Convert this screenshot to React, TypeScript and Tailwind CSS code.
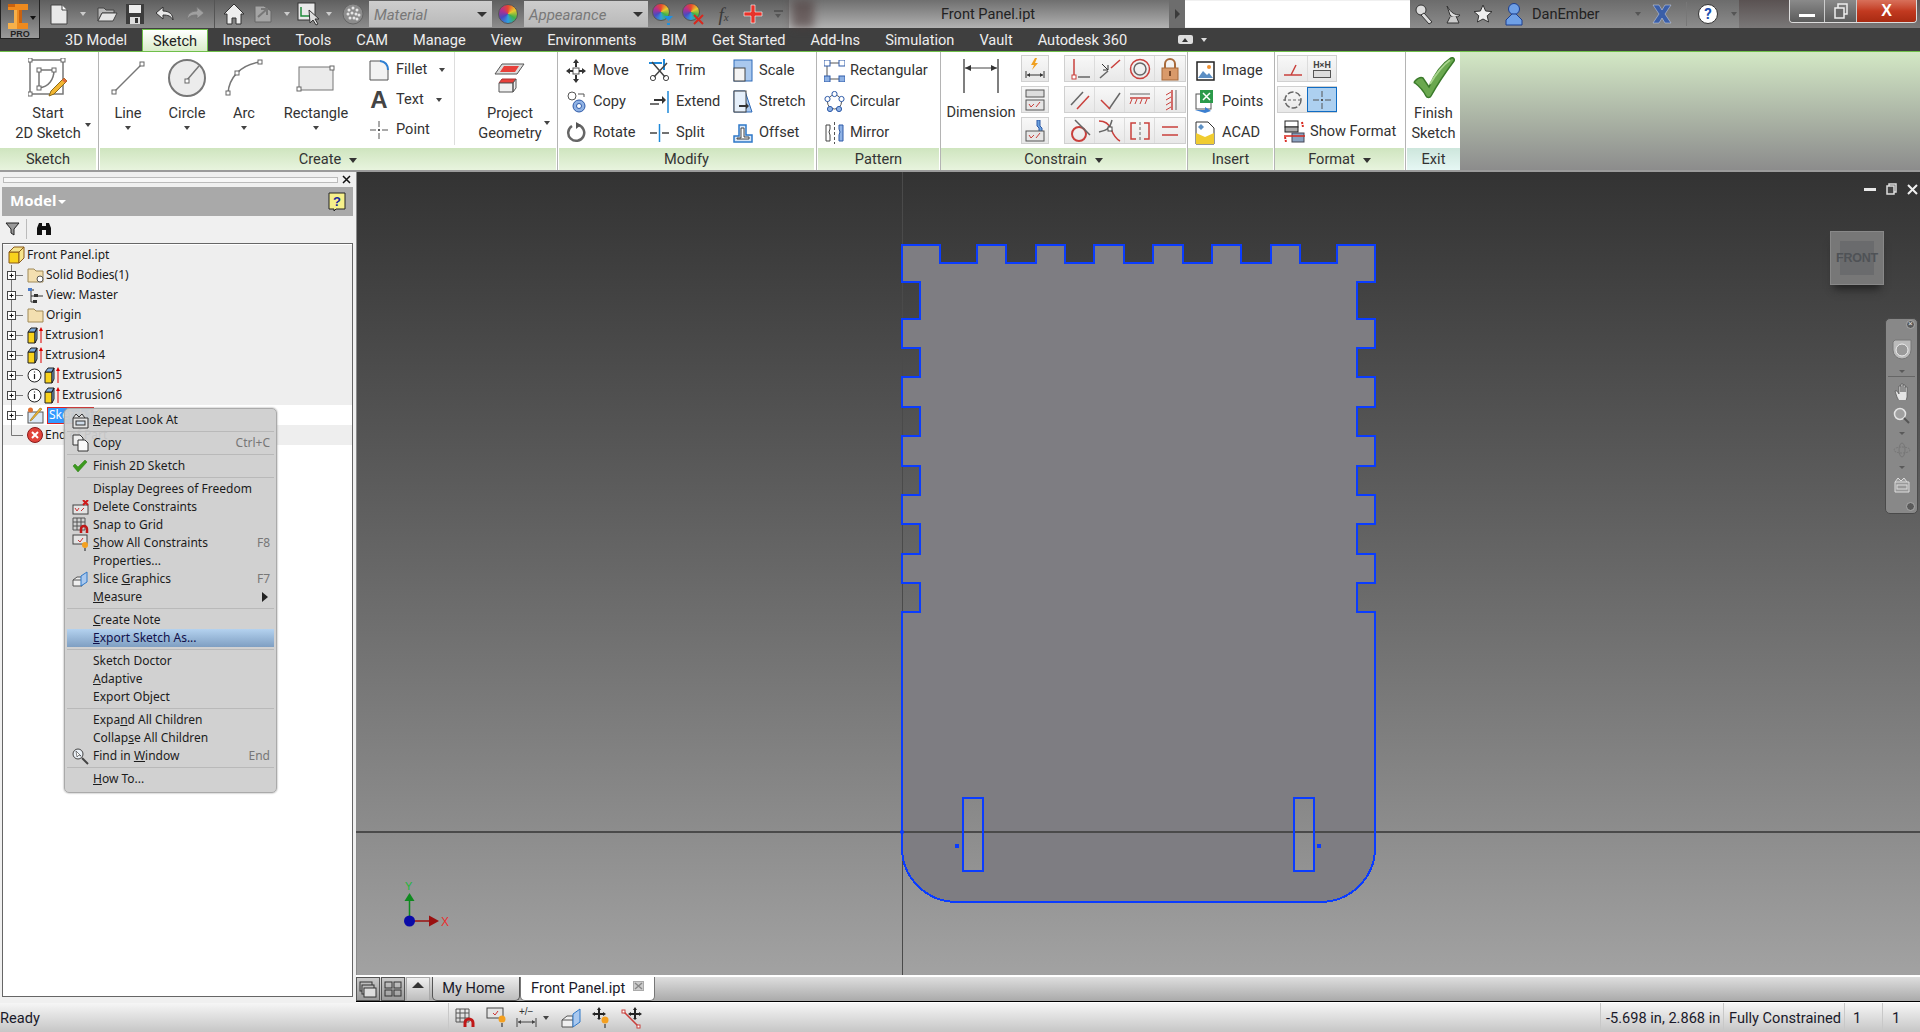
import React from "react";
import { clsx } from "clsx";

type Kids = { children?: React.ReactNode };

const G = "#666";
const R = "#c9403c";

function S({ w, h, children }: { w: number; h: number } & Kids) {
  return (
    <svg width={w} height={h} viewBox={`0 0 ${w} ${h}`} fill="none" className="shrink-0">
      {children}
    </svg>
  );
}

// little square handle used on the sketch icons
function N({ x, y, c = "#666" }: { x: number; y: number; c?: string }) {
  return <rect x={x - 2} y={y - 2} width={4} height={4} fill="#fff" stroke={c} />;
}

function Caret({ className }: { className?: string }) {
  return <span className={clsx("inline-block w-0 h-0 border-x-[3px] border-x-transparent border-t-[4px]", className ?? "border-t-[#444]")} />;
}

/* ---------- title bar ---------- */

function Slot({ className, children }: { className: string } & Kids) {
  return <div className={clsx("flex items-center justify-center shrink-0 h-full", className)}>{children}</div>;
}

const IconNew = () => (
  <S w={20} h={21}>
    <path d="M2 1h11l5 5v14H2z" fill="#e8e8e8" stroke="#444" />
    <path d="M13 1v5h5" fill="#fff" stroke="#444" />
  </S>
);
const IconOpen = () => (
  <S w={22} h={18}>
    <path d="M2 3h6l2 2h8v3H6L2 16z" fill="#b9b9b9" stroke="#444" />
    <path d="M6 8h15l-4 8H2z" fill="#e5e5e5" stroke="#444" />
  </S>
);
const IconSave = () => (
  <S w={20} h={22}>
    <rect x="1" y="1" width="18" height="20" fill="#3c3c3c" />
    <rect x="4" y="2" width="12" height="8" fill="#eee" />
    <rect x="5" y="14" width="10" height="7" fill="#ddd" />
    <rect x="10" y="15" width="3" height="5" fill="#333" />
  </S>
);
const IconUndo = ({ dim }: { dim?: boolean }) => (
  <S w={20} h={16}>
    <path d="M8 1 1 7l7 6V9c5 0 8 1 10 5 0-6-4-9-10-9z" fill={dim ? "#a0a0a0" : "#e8e8e8"} stroke={dim ? "#777" : "#333"} />
  </S>
);
const IconHome = () => (
  <S w={22} h={22}>
    <path d="M11 1 1 11h3v10h5v-6h4v6h5V11h3z" fill="#eee" stroke="#333" />
  </S>
);
const IconReturn = () => (
  <S w={20} h={22}>
    <path d="M2 3h9l7 5v11H2z" fill="#a5a5a5" stroke="#666" />
    <path d="M5 14 14 6M8 6h6v6" stroke="#777" strokeWidth="2" />
  </S>
);
const IconView = () => (
  <S w={22} h={24}>
    <rect x="1" y="1" width="17" height="17" fill="#e9e9e9" stroke="#333" />
    <path d="M4 5v9h9" stroke="#1e8a3a" strokeWidth="1.5" />
    <path d="M12 8l1 13 3-3 3 5 2-1-3-5h4z" fill="#ddd" stroke="#333" />
  </S>
);
const IconMatBall = () => (
  <S w={22} h={22}>
    <circle cx="11" cy="11" r="10" fill="#8c8c8c" stroke="#666" />
    {[[7, 7], [11, 5], [15, 7], [6, 11], [10, 10], [14, 11], [17, 12], [8, 15], [12, 15], [15, 16]].map(([x, y], i) => (
      <circle key={i} cx={x} cy={y} r="1.5" fill="#e6e6e6" />
    ))}
  </S>
);
const Ball = () => <div className="w-[20px] h-[20px] rounded-full border border-[#555] bg-[conic-gradient(#e8462e,#e8c92e,#3fb24a,#2f9fe0,#4a4ac0,#b0308f,#e8462e)]" />;

function BallOverlay({ kind }: { kind: "down" | "x" }) {
  return (
    <div className="relative w-[22px] h-[22px]">
      <div className="w-[18px] h-[18px] rounded-full border border-[#555] bg-[conic-gradient(#e8462e,#e8c92e,#3fb24a,#2f9fe0,#4a4ac0,#b0308f,#e8462e)]" />
      <div className="absolute right-0 bottom-0">
        <S w={11} h={11}>
          {kind === "down" ? <path d="M1 2h9L5.500 7zM4 9h3v2H4z" fill="#1e90e0" /> : <path d="M1 1l9 9M10 1l-9 9" stroke="#d8281e" strokeWidth="2" />}
        </S>
      </div>
    </div>
  );
}

function Combo({ label, className }: { label: string; className: string }) {
  return (
    <div className={clsx("h-[26px] mt-px shrink-0 flex items-center pl-[5px] pr-[5px] bg-gradient-to-b from-[#cdcdcd] to-[#b9b9b9] text-[15px] italic text-[#787878] justify-between", className)}>
      <span className="pt-[2px]">{label}</span>
      <span className="w-0 h-0 border-x-[5px] border-x-transparent border-t-[5px] border-t-[#333]" />
    </div>
  );
}

function AppButton() {
  return (
    <div className="absolute left-0 top-0 w-[40px] h-[39px] border border-[#222] border-t-0 bg-gradient-to-b from-[#585858] via-[#777777] to-[#9a9a9a] z-10 flex flex-col">
      <div className="flex items-start pl-[6px] pt-[4px] h-[29px]">
        <S w={22} h={25}>
          <path d="M1 0h20v6h-6v13h6v6H1v-6h6V6H1z" fill="#ee8a1e" />
          <path d="M7 6h3v13H7zM1 19h9v6H1z" fill="#f7b04a" />
          <path d="M12 6h3v13h-3zM1 0h7v3H1z" fill="#c9620f" />
        </S>
        <div className="mt-[12px] ml-[1px] flex"><Caret className="border-t-[#111]" /></div>
      </div>
      <span className="text-[9px] leading-[10px] font-bold text-[#222] text-center w-[38px] font-['Liberation_Sans',sans-serif]">PRO</span>
    </div>
  );
}

function TitleBar() {
  return (
    <div className="h-[28px] flex shrink-0 text-[#222]">
      <div className="w-[789px] flex shrink-0 pl-[45px] bg-gradient-to-b from-[#5f5f5f] to-[#8d8d8d]">
        <Slot className="w-[28px]"><IconNew /></Slot>
        <Slot className="w-[20px]"><Caret className="border-t-[#ccc]" /></Slot>
        <Slot className="w-[27px]"><IconOpen /></Slot>
        <Slot className="w-[30px]"><IconSave /></Slot>
        <Slot className="w-[30px]"><IconUndo /></Slot>
        <Slot className="w-[30px]"><div className="-scale-x-100 flex"><IconUndo dim /></div></Slot>
        <Slot className="w-[9px]"><div className="w-px h-full bg-[#555]" /></Slot>
        <Slot className="w-[30px]"><IconHome /></Slot>
        <Slot className="w-[28px]"><IconReturn /></Slot>
        <Slot className="w-[20px]"><Caret className="border-t-[#ccc]" /></Slot>
        <Slot className="w-[22px]"><IconView /></Slot>
        <Slot className="w-[20px]"><Caret className="border-t-[#ccc]" /></Slot>
        <Slot className="w-[27px]"><IconMatBall /></Slot>
        <Combo label="Material" className="w-[123px] ml-[3px]" />
        <Slot className="w-[32px]"><Ball /></Slot>
        <Combo label="Appearance" className="w-[124px]" />
        <Slot className="w-[29px]"><BallOverlay kind="down" /></Slot>
        <Slot className="w-[31px]"><BallOverlay kind="x" /></Slot>
        <Slot className="w-[31px]">
          <span className="font-['Liberation_Serif',serif] italic text-[#3a3a3a] text-[19px] leading-none">f<span className="text-[11px]">x</span></span>
        </Slot>
        <Slot className="w-[28px]">
          <S w={20} h={20}><path d="M8 1h4v7h7v4h-7v7H8v-7H1V8h7z" fill="#e8332a" stroke="#fff" strokeWidth=".6" /></S>
        </Slot>
        <Slot className="w-[22px]">
          <div className="flex flex-col items-center gap-[2px]">
            <div className="w-[9px] h-[2px] bg-[#555]" />
            <Caret className="border-t-[#555]" />
          </div>
        </Slot>
      </div>
      <div className="w-[380px] shrink-0 flex bg-gradient-to-b from-[#6f6f6f] to-[#b2b2b2] text-[14.6px] relative justify-center items-center pl-[18px] pt-[2px]">
        <div className="absolute left-[3px] top-0 h-full w-[22px] bg-[#4d3b3b]/60 blur-[4px]" />
        <span>Front Panel.ipt</span>
      </div>
      <div className="w-[16px] shrink-0 bg-[#6d6d6d] flex items-center justify-center">
        <span className="w-0 h-0 border-y-[5px] border-y-transparent border-l-[5px] border-l-[#3a3a3a]" />
      </div>
      <div className="w-[225px] shrink-0 h-[26px] mt-px bg-white" />
      <div className="w-[329px] shrink-0 flex bg-gradient-to-b from-[#6c6c6c] to-[#8c8c8c] text-[14.6px]">
        <Slot className="w-[28px]">
          <S w={20} h={22}><circle cx="7" cy="7" r="5" fill="#ddd" stroke="#333" /><path d="M10 10l8 9-3 2-8-9z" fill="#ddd" stroke="#333" /></S>
        </Slot>
        <Slot className="w-[30px]">
          <S w={18} h={22}><path d="M3 3c4 7 8 9 13 9-2 3-8 3-10 0z" fill="#ddd" stroke="#333" /><path d="M6 14 3 20h12l-3-7" fill="#ccc" stroke="#333" /></S>
        </Slot>
        <Slot className="w-[30px]">
          <S w={20} h={20}><path d="M10 1l2.600 6 6.400.6-4.800 4.200 1.400 6.200L10 15l-5.600 3 1.400-6.200L1 7.600 7.400 7z" fill="#eee" stroke="#333" /></S>
        </Slot>
        <Slot className="w-[32px]">
          <S w={20} h={24}><circle cx="10" cy="7" r="5.500" fill="#6fa0e6" stroke="#1d3f8f" /><path d="M8 12h4l6 6v5H2v-5z" fill="#6fa0e6" stroke="#1d3f8f" /></S>
        </Slot>
        <span className="self-center ml-[2px] w-[105px] pt-[2px]">DanEmber</span>
        <Slot className="w-[16px]"><Caret className="border-t-[#555]" /></Slot>
        <Slot className="w-[32px]">
          <S w={20} h={20}><path d="M1 1h6l3 5 3-5h6l-6 9 6 9h-6l-3-5-3 5H1l6-9z" fill="#3a5ea8" stroke="#cfd8ee" strokeWidth=".5" /></S>
        </Slot>
        <div className="w-px h-[24px] bg-[#777] self-center ml-[8px]" />
        <Slot className="w-[42px]">
          <div className="w-[20px] h-[20px] rounded-full bg-white border border-[#333] flex items-center justify-center text-[#1c4fb0] font-bold text-[15px] leading-none">?</div>
        </Slot>
        <Slot className="w-[10px]"><Caret className="border-t-[#555]" /></Slot>
      </div>
      <div className="flex-1 bg-gradient-to-b from-[#5a5252] to-[#7a7878] pl-[50px]">
        <div className="flex h-[23px] w-[128px] border border-t-0 border-[#ddd] rounded-b-[4px] overflow-hidden">
          <div className="w-[35px] bg-gradient-to-b from-[#8a8a8a] to-[#5c5c5c] border-r border-[#ccc] flex items-end justify-center pb-[5px]">
            <div className="w-[16px] h-[3px] bg-white" />
          </div>
          <div className="w-[32px] bg-gradient-to-b from-[#8a8a8a] to-[#5c5c5c] border-r border-[#ccc] flex items-center justify-center">
            <S w={14} h={16}><rect x="4" y="1" width="9" height="10" stroke="#eee" strokeWidth="1.5" /><rect x="1" y="5" width="9" height="10" fill="#6a6a6a" stroke="#eee" strokeWidth="1.5" /></S>
          </div>
          <div className="flex-1 bg-gradient-to-b from-[#d8705a] via-[#c23a20] to-[#a82a12] flex items-center justify-center text-white font-bold text-[16px] leading-none font-['Liberation_Sans',sans-serif]">X</div>
        </div>
      </div>
    </div>
  );
}

/* ---------- ribbon tabs ---------- */

const TABS_LEFT = ["Inspect", "Tools", "CAM", "Manage", "View", "Environments", "BIM", "Get Started", "Add-Ins", "Simulation", "Vault", "Autodesk 360"];

function TabRow() {
  return (
    <div className="h-[24px] shrink-0 flex items-end bg-[#3f3f3f] border-b border-[#6fbf4a] text-[14.6px] text-[#eee] pl-[53px]">
      <span className="px-[12px] h-[23px] leading-[25px]">3D Model</span>
      <span className="ml-[3px] h-[22px] px-[10px] leading-[23px] border border-b-0 border-[#6fbf4a] bg-gradient-to-b from-[#fff] to-[#d9ecc9] text-[#222]">Sketch</span>
      <div className="flex ml-[2px]">
        {TABS_LEFT.map((t) => (
          <span key={t} className="px-[12.5px] h-[23px] leading-[25px]">{t}</span>
        ))}
      </div>
      <div className="flex items-center h-[23px] ml-[38px] gap-[8px]">
        <div className="w-[15px] h-[9px] bg-[#ddd] rounded-[2px] flex items-center justify-center"><span className="w-0 h-0 border-x-[3px] border-x-transparent border-b-[4px] border-b-[#333]" /></div>
        <Caret className="border-t-[#ddd]" />
      </div>
    </div>
  );
}

/* ---------- ribbon ---------- */

function Panel({ className, label, caret, exit, children }: { className: string; label: string; caret?: boolean; exit?: boolean } & Kids) {
  return (
    <div className={clsx("flex flex-col shrink-0 h-full", className)}>
      <div className="h-[96px] flex relative">{children}</div>
      <div className={clsx("h-[22px] flex items-center justify-center gap-[8px] pt-[2px] text-[14.6px] text-[#333]", exit ? "bg-gradient-to-b from-[#cde6dc] to-[#e6f7f4]" : "bg-gradient-to-b from-[#cfe5bf] to-[#e8f4de]")}>
        {label}
        {caret && <span className="w-0 h-0 border-x-[4px] border-x-transparent border-t-[5px] border-t-[#333]" />}
      </div>
    </div>
  );
}

const PanelGap = ({ className }: { className: string }) => (
  <div className={clsx("flex justify-center shrink-0", className)}><div className="w-px bg-[#b4b4b4]" /></div>
);

function LargeBtn({ className, icon, lines, caret, iconBox = "h-[40px]" }: { className: string; icon: React.ReactNode; lines: string[]; caret?: boolean; iconBox?: string }) {
  return (
    <div className={clsx("flex flex-col items-center pt-[6px] shrink-0 text-[14.6px] text-[#333]", className)}>
      <div className={clsx("flex justify-center", iconBox.includes("items-start") ? "" : "items-center", iconBox)}>{icon}</div>
      <div className="flex flex-col items-center mt-[5px] leading-[20px]">
        {lines.map((l) => <span key={l} className="whitespace-nowrap">{l}</span>)}
      </div>
      {caret && <div className="flex mt-[3px]"><Caret /></div>}
    </div>
  );
}

function SmallCol({ className, children }: { className: string } & Kids) {
  return <div className={clsx("flex flex-col pt-[3px] shrink-0", className)}>{children}</div>;
}

function SmallRow({ icon, label, caret, gap = "gap-[7px]" }: { icon: React.ReactNode; label: string; caret?: string; gap?: string }) {
  return (
    <div className={clsx("h-[31px] flex items-center text-[14.6px] text-[#333] whitespace-nowrap", gap)}>
      <div className="w-[20px] flex justify-center">{icon}</div>
      <span>{label}</span>
      {caret && <div className={clsx("flex", caret)}><Caret /></div>}
    </div>
  );
}

function BtnStrip({ className, items }: { className?: string; items: React.ReactNode[] }) {
  return (
    <div className={clsx("flex h-[27px] border border-[#d0d0d0]", className)}>
      {items.map((it, i) => (
        <div key={i} className="w-[30px] flex items-center justify-center bg-gradient-to-b from-[#f8f8f8] to-[#e8e8e8] border-r border-[#dcdcdc] last:border-r-0">{it}</div>
      ))}
    </div>
  );
}

const StartSketch = () => (
  <S w={40} h={40}>
    <rect x="2" y="2" width="33" height="34" stroke="#777" strokeWidth="1.5" />
    <N x={2} y={2} /><N x={35} y={2} /><N x={2} y={36} />
    <path d="M11 12h15c0 9-5 17-15 18z" stroke="#777" strokeWidth="1.5" />
    <N x={11} y={12} /><N x={26} y={12} /><N x={11} y={30} />
    <path d="M36 20l3 3-13 13-5 2 2-5z" fill="#f2b632" stroke="#8a6a1a" />
    <path d="M36 20l3 3-2 2-3-3z" fill="#e06a3a" />
  </S>
);
const LineIcon = () => (
  <S w={36} h={36}><path d="M4 32 32 4" stroke="#777" strokeWidth="1.5" /><N x={4} y={32} /><N x={32} y={4} /></S>
);
const CircleIcon = () => (
  <S w={40} h={40}>
    <circle cx="20" cy="20" r="18" fill="#ececec" stroke="#777" strokeWidth="2" />
    <path d="M20 22 32 8" stroke="#777" strokeWidth="1.5" />
    <N x={20} y={23} />
  </S>
);
const ArcIcon = () => (
  <S w={40} h={38}>
    <path d="M4 34C5 20 15 6 36 3" stroke="#777" strokeWidth="1.5" />
    <N x={4} y={34} /><N x={13} y={14} /><N x={36} y={3} />
  </S>
);
const RectIcon = () => (
  <S w={40} h={27}>
    <rect x="3" y="2" width="34" height="23" fill="#ebebeb" stroke="#777" />
    <N x={36} y={3} /><N x={3} y={24} />
  </S>
);
const FilletIcon = () => (
  <S w={20} h={21}>
    <path d="M1 1h10q8 1 8 9v10H1z" fill="#f2f2f2" stroke="#555" />
    <path d="M11 1q8 1 8 9" stroke="#2d7fd3" strokeWidth="2" />
  </S>
);
const PointIcon = () => (
  <S w={18} h={18}><path d="M9 0v6M9 12v6M0 9h6M12 9h6" stroke="#555" /><rect x="8" y="8" width="2" height="2" fill="#555" /></S>
);
const ProjectIcon = () => (
  <S w={32} h={30}>
    <path d="M8 1h22l-7 10H1z" fill="#ddd" stroke="#555" />
    <path d="M10 3h15l-4 6H6z" fill="#e8403a" />
    <path d="M8 16h14l-3 4H5z" fill="#e8403a" stroke="#a33" />
    <path d="M5 20h14v9H5zM19 20l3-4v9l-3 4z" fill="#f0f0f0" stroke="#555" />
  </S>
);
const MoveIcon = () => (
  <S w={20} h={24}>
    <rect x="7" y="9" width="6" height="6" stroke="#555" />
    <path d="M10 0l3 4h-2v4H9V4H7zM10 24l3-4h-2v-4H9v4H7zM0 12l4-3v2h3v2H4v2zM20 12l-4-3v2h-3v2h3v2z" fill="#333" />
  </S>
);
const CopyIcon = () => (
  <S w={20} h={23}>
    <circle cx="6" cy="6" r="4" fill="#fff" stroke="#555" />
    <circle cx="13" cy="16" r="6" fill="#8fb2e4" stroke="#2e5aa8" />
    <circle cx="13" cy="16" r="2.500" fill="#fff" stroke="#2e5aa8" />
    <path d="M12 4h6v3" stroke="#555" />
  </S>
);
const RotateIcon = () => (
  <S w={20} h={22}>
    <path d="M6 4a8 8 0 1 0 6-1" stroke="#666" strokeWidth="2.5" />
    <path d="M10 0l5 3-5 4z" fill="#555" />
  </S>
);
const TrimIcon = () => (
  <S w={21} h={23}>
    <path d="M15 0v11" stroke="#1e88d8" strokeWidth="2" /><path d="M0 4h13" stroke="#1e88d8" strokeWidth="2" />
    <path d="M3 3l13 15M18 4 5 18" stroke="#444" strokeWidth="1.5" />
    <circle cx="4" cy="19" r="2.600" stroke="#444" /><circle cx="17" cy="19" r="2.600" stroke="#444" />
  </S>
);
const ExtendIcon = () => (
  <S w={21} h={22}>
    <path d="M19 0v22" stroke="#1e88d8" strokeWidth="1.5" />
    <path d="M1 13h9" stroke="#444" strokeWidth="1.5" />
    <path d="M5 8h8V5l4 4-4 4v-3H5z" fill="#333" />
  </S>
);
const SplitIcon = () => (
  <S w={21} h={20}>
    <path d="M1 10h7M13 10h7" stroke="#444" strokeWidth="1.5" /><path d="M10.500 1v18" stroke="#1e88d8" strokeWidth="1.5" />
  </S>
);
const ScaleIcon = () => (
  <S w={20} h={23}>
    <rect x="1" y="1" width="18" height="21" fill="#a9c8ee" stroke="#2e6ab8" />
    <rect x="1" y="9" width="11" height="13" fill="#f4f4f4" stroke="#444" />
  </S>
);
const StretchIcon = () => (
  <S w={20} h={23}>
    <path d="M1 1h11l7 21H1z" fill="#a9c8ee" stroke="#2e6ab8" />
    <rect x="1" y="1" width="12" height="21" fill="#fff" fillOpacity=".7" stroke="#444" />
    <path d="M6 15h7v-2l3 3-3 3v-2H6z" fill="#333" />
  </S>
);
const OffsetIcon = () => (
  <S w={20} h={20}>
    <path d="M1 19v-6h5V2h7v10h6v7z" fill="#d8e6f6" stroke="#2e78c8" strokeWidth="1.5" />
    <path d="M4 16v-1h4V5h3v9h5v2z" fill="#fff" stroke="#444" />
  </S>
);
const RectPatternIcon = () => (
  <S w={21} h={22}>
    <path d="M3 3h15M3 19h15M3 3v16" stroke="#555" />
    {[[3, 3], [18, 3], [3, 19], [18, 19]].map(([x, y]) => (
      <rect key={`${x}${y}`} x={x - 3} y={y - 3} width={6} height={6} fill={y > 10 ? "#8fb2e4" : "#fff"} stroke="#2e5aa8" />
    ))}
  </S>
);
const CircPatternIcon = () => (
  <S w={21} h={22}>
    <circle cx="10.500" cy="11" r="7" stroke="#555" />
    {[[10.5, 3], [17.5, 8], [15, 18], [6, 18], [3.5, 8]].map(([x, y], i) => (
      <circle key={i} cx={x} cy={y} r={2.6} fill={i === 2 || i === 3 ? "#8fb2e4" : "#fff"} stroke="#2e5aa8" />
    ))}
  </S>
);
const MirrorIcon = () => (
  <S w={21} h={22}>
    <path d="M10.500 0v22" stroke="#555" strokeDasharray="3 2" />
    <path d="M2 3h4v4l-1 3 1 3v6H2z" fill="#fff" stroke="#444" />
    <path d="M19 3h-4v4l1 3-1 3v6h4z" fill="#8fb2e4" stroke="#2e5aa8" />
  </S>
);
const DimensionIcon = () => (
  <S w={38} h={34}>
    <path d="M2 0v34M36 0v34" stroke="#555" strokeWidth="1.5" />
    <path d="M3 9h32" stroke="#444" />
    <path d="M3 9l6-3v6zM35 9l-6-3v6z" fill="#333" />
  </S>
);
const AutoDim = () => (
  <S w={20} h={21}>
    <path d="M10 0 6 7h3l-2 5 6-7h-3l2-5z" fill="#f0a020" />
    <path d="M1 13v7M19 13v7M2 17h16" stroke="#333" />
    <path d="M2 17l3-2v4zM18 17l-3-2v4z" fill="#333" />
  </S>
);
const CheckBox = ({ top }: { top?: boolean }) => (
  <S w={22} h={22}>
    {top && <rect x="2" y="1" width="18" height="7" fill="#ddd" stroke="#555" />}
    {!top && <path d="M13 0h3v6l2 2v4h-3V8l-2-2z" fill="#6aa0dc" stroke="#2e5aa8" />}
    <rect x="2" y="11" width="18" height="10" fill="#e6e6e6" stroke="#555" />
    <path d="M5 15l2 3 3-3M12 18l4-5" stroke={R} />
  </S>
);
const CRow1 = [
  <S key="a" w={22} h={22}><path d="M5 1v16" stroke={R} strokeWidth="1.5" /><path d="M9 19h12" stroke={G} strokeWidth="1.5" /><rect x="3" y="17" width="4" height="4" fill="#fff" stroke={R} /></S>,
  <S key="b" w={22} h={22}><path d="M12 10 21 2" stroke={R} strokeWidth="1.5" /><path d="M1 20l8-7" stroke={G} strokeWidth="1.5" /><path d="M3 6l6 6M9 7v5H4" stroke="#333" /></S>,
  <S key="c" w={22} h={22}><circle cx="11" cy="11" r="9.500" stroke={R} strokeWidth="1.5" /><circle cx="11" cy="11" r="6" stroke={G} strokeWidth="1.5" /></S>,
  <S key="d" w={20} h={24}><path d="M5 11V7a5 5 0 0 1 10 0v4" stroke="#a86a3a" strokeWidth="2" /><rect x="2" y="11" width="16" height="12" fill="#d99a6a" stroke="#a86a3a" /><rect x="9" y="14" width="2" height="5" fill="#7a4a2a" /></S>,
];
const CRow2 = [
  <S key="a" w={22} h={22}><path d="M2 16 14 3" stroke={G} strokeWidth="1.5" /><path d="M8 20 20 7" stroke={R} strokeWidth="1.5" /></S>,
  <S key="b" w={22} h={22}><path d="M10 20 21 4" stroke={G} strokeWidth="1.5" /><path d="M2 11l9 9" stroke={R} strokeWidth="1.5" /></S>,
  <S key="c" w={22} h={16}><path d="M1 6h20" stroke={R} strokeWidth="1.5" /><path d="M1 2h20" stroke={G} strokeWidth="1" /><path d="M3 7l-2 5M8 7l-2 5M13 7l-2 5M18 7l-2 5" stroke={R} /></S>,
  <S key="d" w={16} h={22}><path d="M10 1v20" stroke={R} strokeWidth="1.5" /><path d="M14 1v20" stroke={G} /><path d="M9 3 4 6M9 8 4 11M9 13 4 16M9 18l-5 3" stroke={R} /></S>,
];
const CRow3 = [
  <S key="a" w={22} h={24}><circle cx="10" cy="15" r="7" stroke={R} strokeWidth="2" /><path d="M6 1l15 15" stroke={G} strokeWidth="1.5" /></S>,
  <S key="b" w={24} h={24}><path d="M1 2c7 0 10 3 12 8s5 10 9 12" stroke={R} strokeWidth="1.5" /><path d="M14 1c-2 8-4 10-13 12" stroke={G} strokeWidth="1.5" /><rect x="10" y="8" width="4" height="4" fill="#fff" stroke="#444" /></S>,
  <S key="c" w={20} h={18}><path d="M6 1H1v16h5M14 1h5v16h-5" stroke={R} strokeWidth="1.5" /><path d="M10 0v18" stroke={G} strokeDasharray="3 2" /></S>,
  <S key="d" w={18} h={12}><path d="M1 2h16M1 10h16" stroke={R} strokeWidth="1.5" /></S>,
];
const ImageIcon = () => (
  <S w={19} h={20}>
    <rect x="1" y="1" width="17" height="18" fill="#fff" stroke="#222" strokeWidth="1.5" />
    <path d="M2 17l5-7 4 4 2-2 4 5z" fill="#5c8fc4" /><circle cx="13" cy="6" r="2" fill="#f09030" />
  </S>
);
const PointsIcon = () => (
  <S w={20} h={23}>
    <rect x="1" y="4" width="15" height="15" fill="#fff" stroke="#555" />
    <rect x="5" y="0" width="13" height="13" fill="#2b9a4a" />
    <path d="M8 3l7 7M15 3l-7 7" stroke="#fff" strokeWidth="1.5" />
    <path d="M0 20h10v-3l6 4-6 2z" fill="#3b7fd0" />
  </S>
);
const AcadIcon = () => (
  <S w={20} h={24}>
    <path d="M1 1h12l6 6v16H1z" fill="#fff" stroke="#333" />
    <path d="M1 12l9 4 9-4v11H1z" fill="#f0cc30" />
    <path d="M6 3l3 3-3 3-3-3z" fill="#5c8fc4" />
  </S>
);
const ShowFormat = () => (
  <S w={21} h={24}>
    <rect x="1" y="1" width="13" height="6" stroke="#222" /><rect x="1" y="7" width="13" height="5" fill="#aaa" stroke="#222" />
    <rect x="8" y="13" width="12" height="9" fill="#8aa2c0" stroke="#445" />
    <path d="M0 16h21" stroke="#d8281e" strokeWidth="1.5" />
    <path d="M18 2l1 5M1 17l1 5" stroke="#d8281e" strokeWidth="2" strokeDasharray="2 1" />
  </S>
);
const FinishCheck = () => (
  <S w={42} h={42}>
    <path d="M2 24c3-3 6-4 8-3l6 9C22 16 30 6 38 1c2-1 4 1 3 3C32 16 24 28 18 39c-1 2-4 2-5 0-3-6-7-10-11-13-1 0-1-1 0-2z" fill="#6aa84f" stroke="#3a7a2a" strokeWidth="1.5" />
    <path d="M17 27C23 17 30 8 37 3" stroke="#a7d48c" strokeWidth="2" />
  </S>
);

function Ribbon() {
  return (
    <div className="h-[118px] shrink-0 flex bg-white">
      <Panel className="w-[96px]" label="Sketch">
        <LargeBtn className="w-full" icon={<StartSketch />} lines={["Start", "2D Sketch"]} />
        <div className="absolute left-[85px] top-[71px] flex"><Caret /></div>
      </Panel>
      <PanelGap className="w-[4px]" />
      <Panel className="w-[456px]" label="Create" caret>
        <LargeBtn className="w-[56px]" icon={<LineIcon />} lines={["Line"]} caret />
        <LargeBtn className="w-[62px]" icon={<CircleIcon />} lines={["Circle"]} caret />
        <LargeBtn className="w-[52px]" icon={<ArcIcon />} lines={["Arc"]} caret />
        <LargeBtn className="w-[92px]" icon={<RectIcon />} lines={["Rectangle"]} caret />
        <SmallCol className="w-[86px] ml-[7px] border-r border-[#ddd] mb-[3px]">
          <SmallRow icon={<FilletIcon />} label="Fillet" caret="ml-[5px]" />
          <SmallRow icon={<span className="font-['Liberation_Sans',sans-serif] font-bold text-[24px] leading-none text-[#444]">A</span>} label="Text" caret="ml-[5px]" />
          <SmallRow icon={<PointIcon />} label="Point" />
        </SmallCol>
        <LargeBtn className="w-[92px] ml-[9px]" icon={<ProjectIcon />} lines={["Project", "Geometry"]} />
        <div className="absolute left-[444px] top-[69px] flex"><Caret /></div>
      </Panel>
      <PanelGap className="w-[3px]" />
      <Panel className="w-[255px]" label="Modify">
        <SmallCol className="w-[90px] pl-[7px]">
          <SmallRow icon={<MoveIcon />} label="Move" />
          <SmallRow icon={<CopyIcon />} label="Copy" />
          <SmallRow icon={<RotateIcon />} label="Rotate" />
        </SmallCol>
        <SmallCol className="w-[84px]">
          <SmallRow icon={<TrimIcon />} label="Trim" />
          <SmallRow icon={<ExtendIcon />} label="Extend" />
          <SmallRow icon={<SplitIcon />} label="Split" />
        </SmallCol>
        <SmallCol className="w-[81px]">
          <SmallRow icon={<ScaleIcon />} label="Scale" gap="gap-[6px]" />
          <SmallRow icon={<StretchIcon />} label="Stretch" gap="gap-[6px]" />
          <SmallRow icon={<OffsetIcon />} label="Offset" gap="gap-[6px]" />
        </SmallCol>
      </Panel>
      <PanelGap className="w-[4px]" />
      <Panel className="w-[121px]" label="Pattern">
        <SmallCol className="w-full pl-[6px]">
          <SmallRow icon={<RectPatternIcon />} label="Rectangular" gap="gap-[6px]" />
          <SmallRow icon={<CircPatternIcon />} label="Circular" gap="gap-[6px]" />
          <SmallRow icon={<MirrorIcon />} label="Mirror" gap="gap-[6px]" />
        </SmallCol>
      </Panel>
      <PanelGap className="w-[2px]" />
      <Panel className="w-[245px]" label="Constrain" caret>
        <LargeBtn className="w-[80px]" icon={<DimensionIcon />} lines={["Dimension"]} iconBox="h-[38px] mt-px items-start" />
        <div className="w-[28px] flex flex-col gap-[4px] pt-[3px]">
          <div className="h-[27px] border border-[#d0d0d0] bg-gradient-to-b from-[#f8f8f8] to-[#e8e8e8] flex items-center justify-center"><AutoDim /></div>
          <div className="h-[27px] border border-[#d0d0d0] bg-gradient-to-b from-[#f8f8f8] to-[#e8e8e8] flex items-center justify-center"><CheckBox top /></div>
          <div className="h-[27px] border border-[#d0d0d0] bg-gradient-to-b from-[#f8f8f8] to-[#e8e8e8] flex items-center justify-center"><CheckBox /></div>
        </div>
        <div className="ml-[15px] flex flex-col gap-[4px] pt-[3px]">
          <BtnStrip items={CRow1} />
          <BtnStrip items={CRow2} />
          <BtnStrip items={CRow3} />
        </div>
      </Panel>
      <PanelGap className="w-[2px]" />
      <Panel className="w-[85px]" label="Insert">
        <SmallCol className="w-full pl-[7px]">
          <SmallRow icon={<ImageIcon />} label="Image" />
          <SmallRow icon={<PointsIcon />} label="Points" />
          <SmallRow icon={<AcadIcon />} label="ACAD" />
        </SmallCol>
      </Panel>
      <PanelGap className="w-[2px]" />
      <Panel className="w-[129px]" label="Format" caret>
        <div className="flex flex-col pt-[3px] pl-[2px]">
          <div className="flex h-[27px] w-[60px] border border-[#d0d0d0]">
            <div className="w-[30px] flex items-center justify-center bg-gradient-to-b from-[#f8f8f8] to-[#e8e8e8] border-r border-[#dcdcdc]">
              <S w={22} h={16}><path d="M2 14h18M9 14l5-10" stroke={R} strokeWidth="1.5" /></S>
            </div>
            <div className="flex-1 flex flex-col items-center justify-center bg-gradient-to-b from-[#f8f8f8] to-[#e8e8e8] text-[9px] leading-[10px] text-[#444]">
              <span className="font-bold">H×H</span>
              <div className="w-[18px] h-[8px] border border-[#555] bg-[#ddd]" />
            </div>
          </div>
          <div className="flex h-[27px] w-[60px] mt-[4px] border border-[#d0d0d0] border-r-0">
            <div className="w-[30px] flex items-center justify-center bg-gradient-to-b from-[#f8f8f8] to-[#e8e8e8]">
              <S w={20} h={20}><circle cx="10" cy="10" r="8" stroke="#666" strokeWidth="1.5" strokeDasharray="6 2" /><path d="M0 10h20" stroke="#666" strokeDasharray="3 2" /></S>
            </div>
            <div className="w-[30px] flex items-center justify-center bg-[#add0f0] border border-[#0f6cc4]">
              <PointIcon />
            </div>
          </div>
          <div className="mt-[3px] pl-[7px] flex h-[31px] items-center gap-[5px] text-[14.6px] text-[#333] whitespace-nowrap">
            <ShowFormat />
            <span>Show Format</span>
          </div>
        </div>
      </Panel>
      <PanelGap className="w-[3px]" />
      <Panel className="w-[53px]" label="Exit" exit>
        <LargeBtn className="w-full" icon={<FinishCheck />} lines={["Finish", "Sketch"]} iconBox="h-[40px]" />
      </Panel>
      <div className="flex-1 bg-gradient-to-b from-[#d3e8c5] to-[#8c8c8c]" />
    </div>
  );
}

/* ---------- browser tree ---------- */

function Gutter({ last }: { last?: boolean }) {
  return (
    <S w={24} h={20}>
      <path d={last ? "M8.500 0v10.500H20" : "M8.500 0v20M8.500 10.500H20"} stroke="#777" />
      {!last && (
        <g>
          <rect x="4.500" y="6.500" width="8" height="8" fill="#fff" stroke="#444" />
          <path d="M6.500 10.500h4M8.500 8.500v4" stroke="#111" />
        </g>
      )}
    </S>
  );
}

const PartIcon = () => (
  <S w={17} h={18}>
    <path d="M1 6h10v11H1z" fill="#f8d21c" stroke="#8a5a1a" />
    <path d="M1 6l5-5h10L11 6zM11 6l5-5v11l-5 5z" fill="#f6e48c" stroke="#8a5a1a" />
  </S>
);
const FolderIcon = ({ sub }: { sub?: boolean }) => (
  <S w={17} h={15}>
    <path d="M1 3V1h6l2 2h7v11H1z" fill="#f3dfb0" stroke="#a08a58" />
    {sub && <rect x="10" y="8" width="6" height="6" rx="3" fill="#fff" stroke="#555" />}
  </S>
);
const ViewIcon = () => (
  <S w={17} h={15}>
    <path d="M2 2h5M4 2v12h2M4 8h4M10 8h6" stroke="#333" />
    <rect x="1" y="0" width="4" height="3" fill="#4a7ac8" /><rect x="7" y="6" width="4" height="3" fill="#333" /><rect x="6" y="12" width="4" height="3" fill="#333" />
  </S>
);
const ExtrudeIcon = () => (
  <S w={16} h={17}>
    <path d="M1 5h7v11H1z" fill="#f8d21c" stroke="#222" />
    <path d="M1 5l3-4h6L8 5zM8 5l2-4v11l-2 4z" fill="#7aa8dc" stroke="#222" />
    <path d="M14 16V3" stroke="#d00" />
    <path d="M14 0l2 4h-4z" fill="#d00" />
  </S>
);
const InfoIcon = () => (
  <S w={15} h={15}>
    <circle cx="7.500" cy="7.500" r="6.500" fill="#fff" stroke="#222" />
    <path d="M7.500 6v5M7.500 3.500v1" stroke="#222" strokeWidth="1.2" />
  </S>
);
const SketchIcon = () => (
  <S w={17} h={17}>
    <rect x="1" y="5" width="15" height="11" fill="#dbe8f6" stroke="#555" />
    <path d="M3 14l2-1 10-11-2-1L4 12z" fill="#f2b632" stroke="#8a6a1a" strokeWidth=".6" />
    <circle cx="3.500" cy="3" r="2.500" fill="#e07030" />
  </S>
);
const EndIcon = () => (
  <S w={16} h={16}>
    <circle cx="8" cy="8" r="7.500" fill="#e0433a" stroke="#8a1a1a" />
    <path d="M5 5l6 6M11 5l-6 6" stroke="#fff" strokeWidth="2" />
  </S>
);

function TreeRow({ gutter, icon, label, className }: { gutter?: React.ReactNode; icon: React.ReactNode; label: React.ReactNode; className?: string }) {
  return (
    <div className={clsx("h-[20px] flex items-center whitespace-nowrap", className)}>
      {gutter}
      {icon}
      <span className="ml-[2px]">{label}</span>
    </div>
  );
}

function ModelBrowser() {
  return (
    <div className="w-[356px] shrink-0 flex flex-col bg-[#f0f0f0] pl-[2px] pr-[3px] pb-[6px] font-['Noto_Sans',sans-serif] text-[12px] text-[#1a1a1a]">
      <div className="h-[15px] flex items-center gap-[4px] shrink-0">
        <div className="w-[335px] h-[6px] border border-[#bbb] bg-[#f7f7f7] ml-px" />
        <S w={9} h={9}><path d="M1 1l7 7M8 1 1 8" stroke="#111" strokeWidth="1.5" /></S>
      </div>
      <div className="h-[29px] shrink-0 bg-[#a9a9a9] flex items-center pl-[8px] pr-[7px] text-white font-bold text-[15px]">
        <span className="mt-[-2px]">Model</span>
        <span className="ml-[2px] mt-px w-0 h-0 border-x-[4px] border-x-transparent border-t-[4px] border-t-white" />
        <div className="ml-auto">
          <S w={18} h={20}>
            <path d="M1 1h16v16H8l-2 2v-2H1z" fill="#f6f08a" stroke="#222" />
            <text x="5" y="14" fontSize="13" fontWeight="700" fill="#1a2a9a" fontFamily="Liberation Sans">?</text>
          </S>
        </div>
      </div>
      <div className="h-[27px] shrink-0 flex items-center pl-[3px] pb-[2px]">
        <S w={15} h={14}><path d="M1 1h13L9 7v6l-3-2V7z" fill="#999" stroke="#222" /></S>
        <div className="w-px h-[20px] bg-[#bbb] ml-[6px] mr-[9px]" />
        <S w={16} h={14}><path d="M1 13V6l2-5h3v12zM15 13V6l-2-5h-3v12zM6 4h4v4H6z" fill="#111" /></S>
      </div>
      <div className="flex-1 border border-[#666] bg-white pt-px">
        <div className="bg-[#eeeeee]">
          <TreeRow className="pl-[5px]" icon={<PartIcon />} label="Front Panel.ipt" />
          <TreeRow gutter={<Gutter />} icon={<FolderIcon sub />} label="Solid Bodies(1)" />
          <TreeRow gutter={<Gutter />} icon={<ViewIcon />} label="View: Master" />
          <TreeRow gutter={<Gutter />} icon={<FolderIcon />} label="Origin" />
          <TreeRow gutter={<Gutter />} icon={<ExtrudeIcon />} label="Extrusion1" />
          <TreeRow gutter={<Gutter />} icon={<ExtrudeIcon />} label="Extrusion4" />
          <TreeRow gutter={<Gutter />} icon={<><InfoIcon /><span className="w-[2px]" /><ExtrudeIcon /></>} label="Extrusion5" />
          <TreeRow gutter={<Gutter />} icon={<><InfoIcon /><span className="w-[2px]" /><ExtrudeIcon /></>} label="Extrusion6" />
        </div>
        <TreeRow gutter={<Gutter />} icon={<SketchIcon />} label={<span className="block ml-px w-[47px] h-[17px] leading-[13px] pl-px bg-[#3399ff] text-white border border-[#e02020]">Sketch1</span>} />
        <TreeRow className="bg-[#eeeeee]" gutter={<Gutter last />} icon={<EndIcon />} label="End of Part" />
      </div>
    </div>
  );
}

/* ---------- context menu ---------- */

const MenuSep = () => <div className="h-[5px] flex items-center"><div className="h-px w-full bg-[#b9b9b9]" /></div>;

function MenuItem({ icon, children, hint, arrow, active }: { icon?: React.ReactNode; hint?: string; arrow?: boolean; active?: boolean } & Kids) {
  return (
    <div className={clsx("h-[18px] flex items-center pr-[4px] whitespace-nowrap", active && "bg-gradient-to-b from-[#b4d2ef] to-[#7f9fc2] text-[#10104a]")}>
      <div className="w-[26px] flex justify-center shrink-0">{icon}</div>
      <span>{children}</span>
      {hint && <span className="ml-auto text-[#777]">{hint}</span>}
      {arrow && <span className="ml-auto mr-[2px] w-0 h-0 border-y-[5px] border-y-transparent border-l-[6px] border-l-[#222]" />}
    </div>
  );
}

const U = ({ children }: Kids) => <span className="underline">{children}</span>;

const LookAtIcon = () => (
  <S w={17} h={17}><path d="M1 6h15v10H1zM1 6l3-4 3 3 3-3 3 4" fill="#e4e4e4" stroke="#333" /><rect x="4" y="9" width="9" height="4" fill="#cfdbe8" stroke="#333" /></S>
);
const CopyDocIcon = () => (
  <S w={17} h={18}><path d="M1 1h7l3 3v7H1z" fill="#eee" stroke="#333" /><path d="M6 6h7l3 3v8H6z" fill="#fafafa" stroke="#333" /></S>
);
const GreenCheck = () => (
  <S w={16} h={14}><path d="M1 7l2-2 3 3 7-7 2 2-9 10z" fill="#3c9a1e" stroke="#2a7a12" strokeWidth=".5" /></S>
);
const DelConstraints = () => (
  <S w={17} h={15}><rect x="1" y="5" width="15" height="9" fill="#e4e4e4" stroke="#444" /><path d="M3 8l2 3 2-3M9 11l3-3" stroke="#c33" /><path d="M11 0l5 5M16 0l-5 5" stroke="#d01818" strokeWidth="2" /></S>
);
const SnapGrid = () => (
  <S w={17} h={17}><path d="M1 1h12v12H1zM5 1v12M9 1v12M1 5h12M1 9h12" stroke="#555" /><path d="M9 16v-4a3 3 0 0 1 6 0v4" stroke="#c01818" strokeWidth="2.500" /></S>
);
const ShowAllIcon = () => (
  <S w={17} h={18}><rect x="1" y="1" width="14" height="9" fill="#e4e4e4" stroke="#444" /><path d="M6 6l2 2 3-4" stroke="#c33" /><circle cx="13" cy="11" r="3" fill="#f4a020" /><rect x="12" y="14" width="2" height="3" fill="#777" /></S>
);
const SliceIcon = () => (
  <S w={16} h={16}><path d="M1 9h9v6H1zM1 9l4-3h5v3" fill="#eee" stroke="#555" /><path d="M9 5l6-4v10l-6 4z" fill="#a9c8ee" stroke="#2e78c8" /></S>
);
const FindIcon = () => (
  <S w={17} h={17}><circle cx="6" cy="6" r="5" fill="#eaf0f6" stroke="#444" /><path d="M10 10l6 6" stroke="#444" strokeWidth="2" /><path d="M4 3l1 6 2-2 2 1z" fill="#fff" stroke="#333" strokeWidth=".6" /></S>
);

function ContextMenu() {
  return (
    <div className="absolute left-[64px] top-[408px] w-[213px] pt-[2px] pb-[4px] px-[2px] rounded-[5px] bg-[#cfcfcf]/95 border border-[#aaa] shadow-[0_0_2px_#888] font-['Noto_Sans',sans-serif] text-[12px] text-[#1c1c1c] z-20">
      <MenuItem icon={<LookAtIcon />}><U>R</U>epeat Look At</MenuItem>
      <MenuSep />
      <MenuItem icon={<CopyDocIcon />} hint="Ctrl+C">Copy</MenuItem>
      <MenuSep />
      <MenuItem icon={<GreenCheck />}>Finish 2D Sketch</MenuItem>
      <MenuSep />
      <MenuItem>Display Degrees of Freedom</MenuItem>
      <MenuItem icon={<DelConstraints />}>Delete Constraints</MenuItem>
      <MenuItem icon={<SnapGrid />}>Snap to Grid</MenuItem>
      <MenuItem icon={<ShowAllIcon />} hint="F8"><U>S</U>how All Constraints</MenuItem>
      <MenuItem>Properties...</MenuItem>
      <MenuItem icon={<SliceIcon />} hint="F7">Slice <U>G</U>raphics</MenuItem>
      <MenuItem arrow><U>M</U>easure</MenuItem>
      <MenuSep />
      <MenuItem><U>C</U>reate Note</MenuItem>
      <MenuItem active><U>E</U>xport Sketch As...</MenuItem>
      <MenuSep />
      <MenuItem>Sketch Doctor</MenuItem>
      <MenuItem><U>A</U>daptive</MenuItem>
      <MenuItem>Export Object</MenuItem>
      <MenuSep />
      <MenuItem>Expa<U>n</U>d All Children</MenuItem>
      <MenuItem>Collap<U>s</U>e All Children</MenuItem>
      <MenuItem icon={<FindIcon />} hint="End">Find in <U>W</U>indow</MenuItem>
      <MenuSep />
      <MenuItem><U>H</U>ow To...</MenuItem>
    </div>
  );
}

/* ---------- graphics window ---------- */

const TOP_NOTCHES = [[940, 977], [1006, 1036], [1065, 1094], [1124, 1153], [1183, 1212], [1241, 1271], [1300, 1337]];
const SIDE_NOTCHES = [[282, 319], [348, 377], [407, 436], [466, 495], [524, 554], [583, 612]];

function panelPath() {
  let d = "M902 245";
  for (const [a, b] of TOP_NOTCHES) d += `H${a}V263H${b}V245`;
  d += "H1375";
  for (const [a, b] of SIDE_NOTCHES) d += `V${a}H1357V${b}H1375`;
  d += "V848A55 54 0 0 1 1320 902H957A55 54 0 0 1 902 848";
  for (const [a, b] of [...SIDE_NOTCHES].reverse()) d += `V${b}H920V${a}H902`;
  d += "Z";
  d += "M963 798H983V871H963ZM1294 798H1314V871H1294Z";
  return d;
}

function Sketch() {
  return (
    <svg className="absolute inset-0" width={1564} height={803} viewBox="356 172 1564 803" fill="none">
      <path d="M356.500 172V975" stroke="#8a8a8a" />
      <path d="M902.500 172V975" stroke="#4a4a4a" strokeWidth="1" />
      <path d={panelPath()} fill="#7e7d82" fillRule="evenodd" />
      <path d="M356 832H1920" stroke="#4a4a4a" strokeWidth="2" />
      <path d={panelPath()} stroke="#0a3cff" strokeWidth="2" shapeRendering="crispEdges" />
      <rect x="955" y="844" width="4" height="4" fill="#0a3cff" />
      <rect x="1317" y="844" width="4" height="4" fill="#0a3cff" />
      <circle cx="902" cy="832" r="2" fill="#0a3cff" />
      {/* sketch triad */}
      <path d="M409.500 921V900" stroke="#0f8a1f" strokeWidth="1.5" />
      <path d="M409.500 893l5 8h-10z" fill="#0f8a1f" />
      <text x="405" y="890" fontSize="11" fill="#22b83a" fontFamily="Liberation Sans">Y</text>
      <path d="M409 921h20" stroke="#9a1010" strokeWidth="1.5" />
      <path d="M429 915.500l10 5.500-10 5.500z" fill="#9a1010" />
      <text x="441" y="926" fontSize="12" fill="#e83030" fontFamily="Liberation Sans">X</text>
      <circle cx="409.500" cy="921" r="5.500" fill="#0a0aa8" />
    </svg>
  );
}

function ViewCube() {
  return (
    <div className="absolute left-[1474px] top-[59px] w-[54px] h-[54px] bg-[#777777] border border-[#888] shadow-[0_8px_8px_-4px_#222] flex items-center justify-center">
      <div className="w-[34px] h-[34px] bg-[#6a6b6d] flex items-center justify-center">
        <span className="font-['Liberation_Sans',sans-serif] font-bold text-[12.5px] text-[#4f5256] tracking-[-0.2px]">FRONT</span>
      </div>
    </div>
  );
}

const NavCaret = () => <span className="w-0 h-0 border-x-[3px] border-x-transparent border-t-[3px] border-t-[#5a5a5a]" />;

function NavBar() {
  return (
    <div className="absolute left-[1529px] top-[146px] w-[33px] h-[196px] rounded-[5px] bg-[#888888] border border-[#4a4a4a] flex flex-col items-center">
      <div className="self-end mr-[2px] mt-[1px] w-[9px] h-[9px] rounded-full bg-[#5a5a5a] border border-[#aaa] text-[#ddd] text-[8px] leading-[6px] text-center">×</div>
      <div className="mt-[10px] flex">
        <S w={21} h={21}>
          <path d="M4 1h16v10a9 9 0 1 1-18 0V3z" fill="#bbb" stroke="#777" />
          <circle cx="11" cy="11" r="6" fill="#9a9a9a" stroke="#eee" />
        </S>
      </div>
      <div className="mt-[10px] flex"><NavCaret /></div>
      <div className="w-[27px] h-px bg-[#666] mt-[3px] shrink-0" />
      <div className="mt-[6px] flex">
        <S w={16} h={17}><path d="M3 14 1 8l2 0 2 3V3l2 0v6-8h2v8-7h2v7-5h2v10l-1 4H5z" fill="#e4e4e4" stroke="#555" strokeWidth=".7" /></S>
      </div>
      <div className="mt-[7px] flex">
        <S w={17} h={17}><circle cx="7" cy="7" r="5.500" fill="#a0a0a0" stroke="#e4e4e4" strokeWidth="1.5" /><path d="M11 11l5 5" stroke="#555" strokeWidth="2" /></S>
      </div>
      <div className="mt-[8px] flex"><NavCaret /></div>
      <div className="mt-[7px] flex">
        <S w={18} h={16}><ellipse cx="9" cy="8" rx="8" ry="3" stroke="#777" strokeDasharray="2 1" /><ellipse cx="9" cy="8" rx="3" ry="7" stroke="#777" /></S>
      </div>
      <div className="mt-[8px] flex"><NavCaret /></div>
      <div className="mt-[8px] flex">
        <S w={16} h={16}><path d="M1 5h14v10H1zM1 5l3-4 3 3 3-3 3 4" fill="#999" stroke="#ddd" /><rect x="3" y="8" width="10" height="4" stroke="#ddd" /></S>
      </div>
      <div className="mt-auto mb-[2px] mr-[2px] self-end w-[9px] h-[9px] rounded-full bg-[#5a5a5a] border border-[#aaa]" />
    </div>
  );
}

function Viewport() {
  return (
    <div className="h-[803px] shrink-0 relative overflow-hidden bg-gradient-to-b from-[#333333] to-[#a2a2a2]">
      <Sketch />
      <div className="absolute right-[2px] top-[11px] flex items-center gap-[10px]">
        <div className="w-[12px] h-[3px] bg-[#e8e8e8]" />
        <S w={11} h={12}><rect x="3" y="1" width="7" height="8" stroke="#ddd" strokeWidth="1.5" /><rect x="1" y="3" width="7" height="8" fill="#444" stroke="#ddd" strokeWidth="1.5" /></S>
        <S w={11} h={11}><path d="M1 1l9 9M10 1l-9 9" stroke="#f0f0f0" strokeWidth="2" /></S>
      </div>
      <ViewCube />
      <NavBar />
    </div>
  );
}

/* ---------- bottom ---------- */

function DocTabs() {
  return (
    <div className="h-[25px] mt-[2px] shrink-0 border-b border-black bg-gradient-to-b from-[#dedede] to-[#aaaaaa] flex">
      <div className="w-[24px] h-full bg-gradient-to-b from-[#c8c8c8] to-[#9a9a9a] border border-[#555] flex items-center justify-center">
        <S w={18} h={17}><rect x="1" y="1" width="12" height="9" stroke="#333" /><rect x="3" y="4" width="12" height="9" fill="#bbb" stroke="#333" /><rect x="5" y="7" width="12" height="9" fill="#ddd" stroke="#333" /></S>
      </div>
      <div className="w-[24px] ml-px h-full bg-gradient-to-b from-[#c8c8c8] to-[#9a9a9a] border border-[#555] flex items-center justify-center">
        <S w={18} h={16}><rect x="1" y="1" width="7" height="6" stroke="#333" /><rect x="10" y="1" width="7" height="6" stroke="#333" /><rect x="1" y="9" width="7" height="6" stroke="#333" /><rect x="10" y="9" width="7" height="6" stroke="#333" /></S>
      </div>
      <div className="w-[24px] ml-px h-full bg-gradient-to-b from-[#f0f0f0] to-[#bdbdbd] border border-[#aaa] flex items-start justify-center pt-[4px]">
        <span className="w-0 h-0 border-x-[6px] border-x-transparent border-b-[6px] border-b-[#333]" />
      </div>
      <div className="w-[88px] ml-[2px] h-full border-b border-x border-[#555] rounded-b-[5px] bg-gradient-to-b from-[#ececec] to-[#bdbdbd] text-[14.6px] text-[#1a1a2a] flex items-center justify-center pr-[5px]">My Home</div>
      <div className="w-[135px] h-full border-x border-b border-[#777] rounded-b-[5px] bg-white text-[14.6px] text-[#1a1a2a] flex items-center pl-[10px]">
        Front Panel.ipt
        <div className="ml-[8px] mb-[6px] flex">
          <S w={11} h={10}><rect x=".5" y=".5" width="10" height="9" fill="#ccc" stroke="#aaa" /><path d="M2 2l7 6M9 2 2 8" stroke="#888" strokeWidth="1.5" /></S>
        </div>
      </div>
    </div>
  );
}

const StatusCell = ({ className, children }: { className: string } & Kids) => (
  <div className={clsx("border-l border-[#c8c8c8] h-full flex items-center shrink-0 whitespace-nowrap pt-[3px]", className)}>{children}</div>
);

function StatusBar() {
  return (
    <div className="h-[29px] shrink-0 flex bg-gradient-to-b from-[#f6f6f6] to-[#c6c6c6] text-[14.6px] text-[#1a1a2a]">
      <div className="w-[448px] pl-0 pt-[3px] flex items-center shrink-0">Ready</div>
      <div className="flex items-center border-l border-[#c8c8c8] pl-[6px] flex-1">
        <S w={20} h={20}><path d="M1 1h13v13H1zM5 1v13M10 1v13M1 5h13M1 10h13" stroke="#555" /><path d="M10 19v-4a4 4 0 0 1 8 0v4" stroke="#c01818" strokeWidth="3" /></S>
        <div className="ml-[11px] flex">
          <S w={20} h={21}><rect x="1" y="1" width="16" height="10" fill="#e4e4e4" stroke="#444" /><path d="M7 6l2 2 3-4" stroke="#c33" /><circle cx="16" cy="12" r="3.500" fill="#f4a020" /><rect x="15" y="16" width="2" height="4" fill="#777" /></S>
        </div>
        <div className="ml-[10px] flex">
          <S w={21} h={21}><text x="3" y="8" fontSize="10" fill="#333" fontFamily="Liberation Sans">+/−</text><path d="M1 11v9M20 11v9M2 15h17" stroke="#444" /><path d="M2 15l3-2v4zM19 15l-3-2v4z" fill="#444" /></S>
        </div>
        <div className="ml-[6px] flex"><Caret /></div>
        <div className="ml-[12px] flex">
          <S w={20} h={20}><path d="M1 12h11v7H1zM1 12l5-4h6v4" fill="#f0f0f0" stroke="#555" /><path d="M12 6l7-5v13l-7 5z" fill="#a9c8ee" stroke="#2e78c8" /></S>
        </div>
        <div className="ml-[11px] flex">
          <S w={20} h={22}><path d="M7 0l2 3H8v3h3V5l3 2-3 2V8H8v3h1l-2 2-2-2h1V8H3v1L0 7l3-2v1h3V3H5z" fill="#222" /><circle cx="13" cy="13" r="3.500" fill="#f4a020" /><rect x="12" y="17" width="2" height="4" fill="#777" /></S>
        </div>
        <div className="ml-[9px] flex">
          <S w={21} h={22}><path d="M2 4l16 16" stroke={R} strokeWidth="1.5" /><rect x="1" y="3" width="3" height="3" fill="#fff" stroke={R} /><rect x="16" y="18" width="3" height="3" fill="#fff" stroke={R} /><path d="M14 0l2 3h-1v3h3V5l3 2-3 2V8h-3v3h1l-2 2-2-2h1V8h-3v1L7 7l3-2v1h3V3h-1z" fill="#222" /></S>
        </div>
      </div>
      <StatusCell className="w-[123px] pl-[5px]">-5.698 in, 2.868 in</StatusCell>
      <StatusCell className="w-[121px] pl-[5px]">Fully Constrained</StatusCell>
      <StatusCell className="w-[38px] pl-[8px]">1</StatusCell>
      <StatusCell className="w-[38px] pl-[9px]">1</StatusCell>
    </div>
  );
}

export default function App() {
  return (
    <div className="relative w-[1920px] h-[1032px] overflow-hidden flex flex-col bg-[#f0f0f0] font-['Roboto',sans-serif]">
      <TitleBar />
      <TabRow />
      <Ribbon />
      <div className="h-[2px] shrink-0 bg-[#9b9b9b]" />
      <div className="h-[831px] shrink-0 flex">
        <ModelBrowser />
        <div className="flex-1 flex flex-col bg-white">
          <Viewport />
          <DocTabs />
        </div>
      </div>
      <StatusBar />
      <AppButton />
      <ContextMenu />
    </div>
  );
}
